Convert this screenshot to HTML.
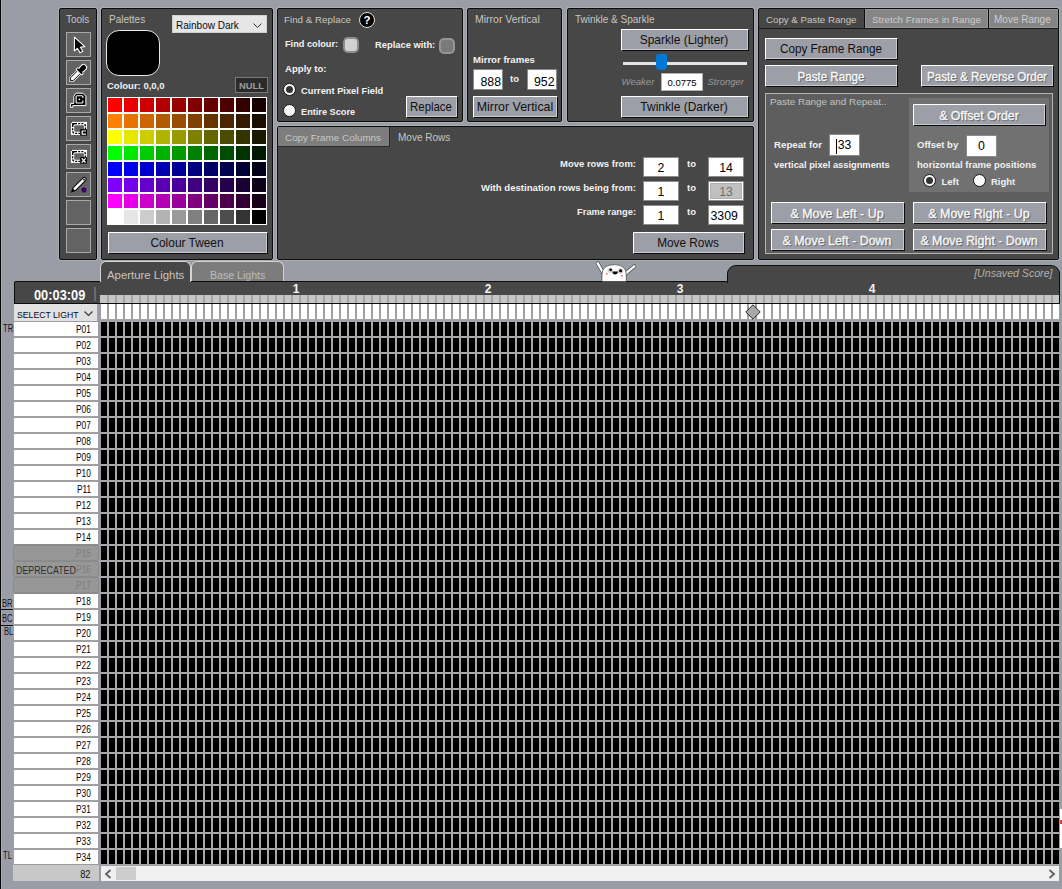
<!DOCTYPE html><html><head><meta charset="utf-8"><style>
html,body{margin:0;padding:0;}
body{width:1062px;height:889px;overflow:hidden;position:relative;background:#9a9da6;font-family:"Liberation Sans",sans-serif;}
body div{position:absolute;}
.t{white-space:nowrap;}
</style></head><body>
<div style="left:0px;top:0px;width:1px;height:889px;background:#060606"></div>
<div style="left:1px;top:0px;width:1px;height:889px;background:#aaadb4"></div>
<div style="left:59px;top:8px;width:38px;height:252px;background:#474747;border:1px solid #0c0c0c;border-radius:2px;box-shadow:0 0 0 1px #aaadb4;box-sizing:border-box"></div>
<div class="t" style="top:10px;font-size:10px;line-height:20px;color:#c9c6c0;left:66px;">Tools</div>
<div style="left:66px;top:32px;width:25px;height:25px;background:#636363;border:1px solid #a8a8a8;box-sizing:border-box"></div>
<div style="left:66px;top:60px;width:25px;height:25px;background:#636363;border:1px solid #a8a8a8;box-sizing:border-box"></div>
<div style="left:66px;top:88px;width:25px;height:25px;background:#636363;border:1px solid #a8a8a8;box-sizing:border-box"></div>
<div style="left:66px;top:116px;width:25px;height:25px;background:#636363;border:1px solid #a8a8a8;box-sizing:border-box"></div>
<div style="left:66px;top:144px;width:25px;height:25px;background:#636363;border:1px solid #a8a8a8;box-sizing:border-box"></div>
<div style="left:66px;top:172px;width:25px;height:25px;background:#636363;border:1px solid #a8a8a8;box-sizing:border-box"></div>
<div style="left:66px;top:200px;width:25px;height:25px;background:#636363;border:1px solid #a8a8a8;box-sizing:border-box"></div>
<div style="left:66px;top:228px;width:25px;height:25px;background:#636363;border:1px solid #a8a8a8;box-sizing:border-box"></div>
<svg style="position:absolute;left:66px;top:32px" width="25" height="25" viewBox="0 0 25 25"><path d="M8.4,5.2 L8.4,18.9 L11.4,16.3 L14.0,20.8 L16.8,19.2 L14.4,15.3 L18.9,14.6 Z" fill="#000" stroke="#fff" stroke-width="1.1" stroke-linejoin="round"/></svg>
<svg style="position:absolute;left:66px;top:60px" width="25" height="25" viewBox="0 0 25 25"><g transform="rotate(45 12.05 13)"><path d="M10.1,11.5 L14,11.5 L14,21.8 L12.05,23.8 L10.1,21.8 Z" fill="#fff" stroke="#fff" stroke-width="2.2"/><path d="M10.1,11.5 L14,11.5 L14,21.8 L12.05,23.8 L10.1,21.8 Z" fill="#fff" stroke="#000" stroke-width="0.9"/><rect x="7.9" y="9.4" width="8.3" height="2.6" rx="1.2" fill="#000" stroke="#fff" stroke-width="1"/><rect x="9.1" y="2.3" width="5.9" height="7.8" rx="2.6" fill="#000" stroke="#fff" stroke-width="1"/><rect x="9.3" y="9" width="5.5" height="2" fill="#000"/></g></svg>
<svg style="position:absolute;left:66px;top:88px" width="25" height="25" viewBox="0 0 25 25"><path d="M10.1,5.2 L16.9,5.2 L19.9,8.2 L19.9,17.6 L6.8,17.6 L6.8,19.4 L4.6,19.4 L4.6,15.4 L7.8,15.4 L7.8,8.2 Z" fill="#000" stroke="#fff" stroke-width="1"/><path d="M16.9,12.6 L16.9,14 Q16.9,15 15.9,15 L11.1,15 Q10.1,15 10.1,14 L10.1,8.8 Q10.1,7.8 11.1,7.8 L15.9,7.8 Q16.9,7.8 16.9,8.8 L16.9,10.2" fill="none" stroke="#fff" stroke-width="1.1"/><circle cx="13.4" cy="11.4" r="0.8" fill="#fff"/></svg>
<svg style="position:absolute;left:66px;top:116px" width="25" height="25" viewBox="0 0 25 25"><rect x="4.9" y="5.9" width="16.1" height="13" fill="#fff"/><rect x="6.6" y="7.6" width="12.8" height="9.8" rx="2.4" fill="none" stroke="#000" stroke-width="1.4" stroke-dasharray="2 1.2"/><rect x="8.2" y="9.2" width="9.8" height="6.6" rx="1.2" fill="#636363"/><path d="M6.1,7.1 L9.5,7.1 L6.1,10.5 Z" fill="#000"/><rect x="4.9" y="5.7" width="1" height="1" fill="#000"/><rect x="14.2" y="13.2" width="6.8" height="6.4" fill="#000"/><path d="M20,15 L16.2,15 L16.2,18.2 L20,18.2" fill="none" stroke="#fff" stroke-width="1.2"/></svg>
<svg style="position:absolute;left:66px;top:144px" width="25" height="25" viewBox="0 0 25 25"><rect x="4.9" y="5.9" width="16.1" height="13" fill="#fff"/><rect x="6.6" y="7.6" width="12.8" height="9.8" rx="2.4" fill="none" stroke="#000" stroke-width="1.4" stroke-dasharray="2 1.2"/><rect x="8.2" y="9.2" width="9.8" height="6.6" rx="1.2" fill="#636363"/><path d="M6.1,7.1 L9.5,7.1 L6.1,10.5 Z" fill="#000"/><rect x="4.9" y="5.7" width="1" height="1" fill="#000"/><rect x="14.2" y="13.2" width="6.8" height="6.4" fill="#000"/><path d="M15.8,14.4 L19.6,18.6 M19.6,14.4 L15.8,18.6" fill="none" stroke="#fff" stroke-width="1.4"/></svg>
<svg style="position:absolute;left:66px;top:172px" width="25" height="25" viewBox="0 0 25 25"><g transform="rotate(45 12 13.5)"><path d="M10.2,4.5 a1.8,1.8 0 0 1 3.6,0 L13.8,18.5 L12,22.5 L10.2,18.5 Z" fill="#fff" stroke="#000" stroke-width="1"/><path d="M10.6,19.3 L12,22.5 L13.4,19.3 Z" fill="#000"/><circle cx="12" cy="5" r="0.9" fill="#000"/></g><circle cx="18" cy="18" r="3.2" fill="#3a0a5a" stroke="#8a8a8a" stroke-width="0.6"/></svg>
<div style="left:101px;top:8px;width:172px;height:252px;background:#474747;border:1px solid #0c0c0c;border-radius:2px;box-shadow:0 0 0 1px #aaadb4;box-sizing:border-box"></div>
<div class="t" style="top:10px;font-size:10px;line-height:20px;color:#c9c6c0;left:109px;">Palettes</div>
<div style="left:172px;top:15px;width:95px;height:18px;background:#e6e6e6;border:1px solid #d0d0d0;box-sizing:border-box"></div>
<div class="t" style="top:16px;font-size:10px;line-height:20px;color:#0a0a1a;left:176px;">Rainbow Dark</div>
<svg style="position:absolute;left:253px;top:23px" width="9" height="5"><polyline points="0.5,0.5 4.5,4.5 8.5,0.5" fill="none" stroke="#333" stroke-width="1"/></svg>
<div style="left:106px;top:30px;width:54px;height:46px;background:#000;border:1px solid #e8e8e8;border-radius:13px;box-sizing:border-box"></div>
<div class="t" style="top:76px;font-size:9.5px;line-height:20px;color:#f2f2f2;font-weight:bold;left:107px;">Colour: 0,0,0</div>
<div style="left:235px;top:77px;width:33px;height:16px;background:#2b2b2b;border:1px solid #7a7a7a;box-sizing:border-box"></div>
<div class="t" style="top:76px;font-size:9.4px;line-height:20px;color:#9c9c9c;font-weight:bold;left:-48.5px;width:600px;text-align:center;">NULL</div>
<div style="left:107px;top:97px;width:160px;height:128px;background:#fff"></div>
<div style="left:108px;top:98px;width:14px;height:14px;background:#ff0000"></div>
<div style="left:124px;top:98px;width:14px;height:14px;background:#e60000"></div>
<div style="left:140px;top:98px;width:14px;height:14px;background:#cc0000"></div>
<div style="left:156px;top:98px;width:14px;height:14px;background:#b20000"></div>
<div style="left:172px;top:98px;width:14px;height:14px;background:#990000"></div>
<div style="left:188px;top:98px;width:14px;height:14px;background:#800000"></div>
<div style="left:204px;top:98px;width:14px;height:14px;background:#660000"></div>
<div style="left:220px;top:98px;width:14px;height:14px;background:#4c0000"></div>
<div style="left:236px;top:98px;width:14px;height:14px;background:#330000"></div>
<div style="left:252px;top:98px;width:14px;height:14px;background:#190000"></div>
<div style="left:108px;top:114px;width:14px;height:14px;background:#ff8000"></div>
<div style="left:124px;top:114px;width:14px;height:14px;background:#e67300"></div>
<div style="left:140px;top:114px;width:14px;height:14px;background:#cc6600"></div>
<div style="left:156px;top:114px;width:14px;height:14px;background:#b25a00"></div>
<div style="left:172px;top:114px;width:14px;height:14px;background:#994d00"></div>
<div style="left:188px;top:114px;width:14px;height:14px;background:#804000"></div>
<div style="left:204px;top:114px;width:14px;height:14px;background:#663300"></div>
<div style="left:220px;top:114px;width:14px;height:14px;background:#4c2600"></div>
<div style="left:236px;top:114px;width:14px;height:14px;background:#331a00"></div>
<div style="left:252px;top:114px;width:14px;height:14px;background:#190d00"></div>
<div style="left:108px;top:130px;width:14px;height:14px;background:#ffff00"></div>
<div style="left:124px;top:130px;width:14px;height:14px;background:#e6e600"></div>
<div style="left:140px;top:130px;width:14px;height:14px;background:#cccc00"></div>
<div style="left:156px;top:130px;width:14px;height:14px;background:#b2b200"></div>
<div style="left:172px;top:130px;width:14px;height:14px;background:#999900"></div>
<div style="left:188px;top:130px;width:14px;height:14px;background:#808000"></div>
<div style="left:204px;top:130px;width:14px;height:14px;background:#666600"></div>
<div style="left:220px;top:130px;width:14px;height:14px;background:#4c4c00"></div>
<div style="left:236px;top:130px;width:14px;height:14px;background:#333300"></div>
<div style="left:252px;top:130px;width:14px;height:14px;background:#191900"></div>
<div style="left:108px;top:146px;width:14px;height:14px;background:#00ff00"></div>
<div style="left:124px;top:146px;width:14px;height:14px;background:#00e600"></div>
<div style="left:140px;top:146px;width:14px;height:14px;background:#00cc00"></div>
<div style="left:156px;top:146px;width:14px;height:14px;background:#00b200"></div>
<div style="left:172px;top:146px;width:14px;height:14px;background:#009900"></div>
<div style="left:188px;top:146px;width:14px;height:14px;background:#008000"></div>
<div style="left:204px;top:146px;width:14px;height:14px;background:#006600"></div>
<div style="left:220px;top:146px;width:14px;height:14px;background:#004c00"></div>
<div style="left:236px;top:146px;width:14px;height:14px;background:#003300"></div>
<div style="left:252px;top:146px;width:14px;height:14px;background:#001900"></div>
<div style="left:108px;top:162px;width:14px;height:14px;background:#0000ff"></div>
<div style="left:124px;top:162px;width:14px;height:14px;background:#0000e6"></div>
<div style="left:140px;top:162px;width:14px;height:14px;background:#0000cc"></div>
<div style="left:156px;top:162px;width:14px;height:14px;background:#0000b2"></div>
<div style="left:172px;top:162px;width:14px;height:14px;background:#000099"></div>
<div style="left:188px;top:162px;width:14px;height:14px;background:#000080"></div>
<div style="left:204px;top:162px;width:14px;height:14px;background:#000066"></div>
<div style="left:220px;top:162px;width:14px;height:14px;background:#00004c"></div>
<div style="left:236px;top:162px;width:14px;height:14px;background:#000033"></div>
<div style="left:252px;top:162px;width:14px;height:14px;background:#000019"></div>
<div style="left:108px;top:178px;width:14px;height:14px;background:#8000ff"></div>
<div style="left:124px;top:178px;width:14px;height:14px;background:#7300e6"></div>
<div style="left:140px;top:178px;width:14px;height:14px;background:#6600cc"></div>
<div style="left:156px;top:178px;width:14px;height:14px;background:#5a00b2"></div>
<div style="left:172px;top:178px;width:14px;height:14px;background:#4d0099"></div>
<div style="left:188px;top:178px;width:14px;height:14px;background:#400080"></div>
<div style="left:204px;top:178px;width:14px;height:14px;background:#330066"></div>
<div style="left:220px;top:178px;width:14px;height:14px;background:#26004c"></div>
<div style="left:236px;top:178px;width:14px;height:14px;background:#1a0033"></div>
<div style="left:252px;top:178px;width:14px;height:14px;background:#0d0019"></div>
<div style="left:108px;top:194px;width:14px;height:14px;background:#ff00ff"></div>
<div style="left:124px;top:194px;width:14px;height:14px;background:#e600e6"></div>
<div style="left:140px;top:194px;width:14px;height:14px;background:#cc00cc"></div>
<div style="left:156px;top:194px;width:14px;height:14px;background:#b200b2"></div>
<div style="left:172px;top:194px;width:14px;height:14px;background:#990099"></div>
<div style="left:188px;top:194px;width:14px;height:14px;background:#800080"></div>
<div style="left:204px;top:194px;width:14px;height:14px;background:#660066"></div>
<div style="left:220px;top:194px;width:14px;height:14px;background:#4c004c"></div>
<div style="left:236px;top:194px;width:14px;height:14px;background:#330033"></div>
<div style="left:252px;top:194px;width:14px;height:14px;background:#190019"></div>
<div style="left:108px;top:210px;width:14px;height:14px;background:#ffffff"></div>
<div style="left:124px;top:210px;width:14px;height:14px;background:#e6e6e6"></div>
<div style="left:140px;top:210px;width:14px;height:14px;background:#cccccc"></div>
<div style="left:156px;top:210px;width:14px;height:14px;background:#b3b3b3"></div>
<div style="left:172px;top:210px;width:14px;height:14px;background:#999999"></div>
<div style="left:188px;top:210px;width:14px;height:14px;background:#808080"></div>
<div style="left:204px;top:210px;width:14px;height:14px;background:#666666"></div>
<div style="left:220px;top:210px;width:14px;height:14px;background:#4d4d4d"></div>
<div style="left:236px;top:210px;width:14px;height:14px;background:#333333"></div>
<div style="left:252px;top:210px;width:14px;height:14px;background:#000000"></div>
<div style="left:108px;top:232px;width:160px;height:22px;background:#9c9fa7;border-top:1px solid #fff;border-left:1px solid #fff;border-right:1px solid #0c0c0c;border-bottom:1px solid #0c0c0c;box-shadow:inset -1px -1px 0 #c8c9cc;box-sizing:border-box"></div>
<div class="t" style="top:233px;font-size:12.73px;line-height:20px;color:#101010;left:-113.0px;width:600px;text-align:center;transform-origin:50% 0;transform:scaleX(0.935);">Colour Tween</div>
<div style="left:277px;top:8px;width:186px;height:114px;background:#474747;border:1px solid #0c0c0c;border-radius:2px;box-shadow:0 0 0 1px #aaadb4;box-sizing:border-box"></div>
<div class="t" style="top:10px;font-size:9.8px;line-height:20px;color:#c9c6c0;left:284px;">Find &amp; Replace</div>
<div style="left:359px;top:12px;width:16px;height:16px;border-radius:50%;background:#000;border:1.5px solid #e0e0e0;box-sizing:border-box"></div>
<div class="t" style="top:10px;font-size:11.5px;line-height:20px;color:#fff;font-weight:bold;left:67px;width:600px;text-align:center;">?</div>
<div class="t" style="top:34px;font-size:9.2px;line-height:20px;color:#f2f2f2;font-weight:bold;left:285px;">Find colour:</div>
<div style="left:343px;top:37px;width:16px;height:16px;background:#d2d2d2;border:2px solid #8e8e8e;border-radius:5px;box-sizing:border-box"></div>
<div class="t" style="top:35px;font-size:9.35px;line-height:20px;color:#f2f2f2;font-weight:bold;left:375px;">Replace with:</div>
<div style="left:439px;top:38px;width:16px;height:16px;background:#7a7a7a;border:2px solid #959595;border-radius:5px;box-sizing:border-box"></div>
<div class="t" style="top:59px;font-size:9.6px;line-height:20px;color:#f2f2f2;font-weight:bold;left:285px;">Apply to:</div>
<div style="left:283px;top:83px;width:13px;height:13px;border-radius:50%;background:#fafafa;border:1px solid #151515;box-sizing:border-box"></div>
<div style="left:286px;top:86px;width:7px;height:7px;border-radius:50%;background:#333"></div>
<div class="t" style="top:81px;font-size:9.3px;line-height:20px;color:#f2f2f2;font-weight:bold;left:301px;">Current Pixel Field</div>
<div style="left:283px;top:104px;width:13px;height:13px;border-radius:50%;background:#fafafa;border:1px solid #151515;box-sizing:border-box"></div>
<div class="t" style="top:102px;font-size:9.2px;line-height:20px;color:#f2f2f2;font-weight:bold;left:301px;">Entire Score</div>
<div style="left:406px;top:96px;width:52px;height:22px;background:#9c9fa7;border-top:1px solid #fff;border-left:1px solid #fff;border-right:1px solid #0c0c0c;border-bottom:1px solid #0c0c0c;box-shadow:inset -1px -1px 0 #c8c9cc;box-sizing:border-box"></div>
<div class="t" style="top:97px;font-size:12.2px;line-height:20px;color:#101010;left:131.0px;width:600px;text-align:center;transform-origin:50% 0;transform:scaleX(0.935);">Replace</div>
<div style="left:467px;top:8px;width:95px;height:114px;background:#474747;border:1px solid #0c0c0c;border-radius:2px;box-shadow:0 0 0 1px #aaadb4;box-sizing:border-box"></div>
<div class="t" style="top:9px;font-size:10.5px;line-height:20px;color:#c9c6c0;left:475px;">Mirror Vertical</div>
<div class="t" style="top:50px;font-size:9.6px;line-height:20px;color:#f2f2f2;font-weight:bold;left:473px;">Mirror frames</div>
<div style="left:473px;top:69px;width:30px;height:21px;background:#fff;border:1px solid #8a8a8a;box-sizing:border-box"></div>
<div class="t" style="top:72px;font-size:12.3px;line-height:20px;color:#000;right:561px;">888</div>
<div class="t" style="top:69px;font-size:9.5px;line-height:20px;color:#f2f2f2;font-weight:bold;left:510px;">to</div>
<div style="left:527px;top:69px;width:30px;height:21px;background:#fff;border:1px solid #8a8a8a;box-sizing:border-box"></div>
<div class="t" style="top:72px;font-size:12.3px;line-height:20px;color:#000;right:507.5px;">952</div>
<div style="left:473px;top:96px;width:85px;height:22px;background:#9c9fa7;border-top:1px solid #fff;border-left:1px solid #fff;border-right:1px solid #0c0c0c;border-bottom:1px solid #0c0c0c;box-shadow:inset -1px -1px 0 #c8c9cc;box-sizing:border-box"></div>
<div class="t" style="top:97px;font-size:13.27px;line-height:20px;color:#101010;left:214.5px;width:600px;text-align:center;transform-origin:50% 0;transform:scaleX(0.935);">Mirror Vertical</div>
<div style="left:567px;top:8px;width:187px;height:114px;background:#474747;border:1px solid #0c0c0c;border-radius:2px;box-shadow:0 0 0 1px #aaadb4;box-sizing:border-box"></div>
<div class="t" style="top:10px;font-size:10px;line-height:20px;color:#c9c6c0;left:575px;">Twinkle &amp; Sparkle</div>
<div style="left:621px;top:29px;width:128px;height:22px;background:#9c9fa7;border-top:1px solid #fff;border-left:1px solid #fff;border-right:1px solid #0c0c0c;border-bottom:1px solid #0c0c0c;box-shadow:inset -1px -1px 0 #c8c9cc;box-sizing:border-box"></div>
<div class="t" style="top:30px;font-size:12.84px;line-height:20px;color:#101010;left:384.0px;width:600px;text-align:center;transform-origin:50% 0;transform:scaleX(0.935);">Sparkle (Lighter)</div>
<div style="left:623px;top:62px;width:124px;height:3px;background:#e4e4e4"></div>
<div style="left:656px;top:54px;width:11px;height:16px;background:#0078d7;border-radius:2px 2px 4px 4px"></div>
<div class="t" style="top:72px;font-size:9.6px;line-height:20px;color:#9a9a9a;font-style:italic;left:621.5px;">Weaker</div>
<div style="left:661px;top:73px;width:42px;height:18px;background:#fff;border:1px solid #b0b0b0;box-sizing:border-box"></div>
<div class="t" style="top:73px;font-size:9.5px;line-height:20px;color:#000;left:382.0px;width:600px;text-align:center;">0.0775</div>
<div class="t" style="top:72px;font-size:9.5px;line-height:20px;color:#9a9a9a;font-style:italic;left:707.5px;">Stronger</div>
<div style="left:621px;top:96px;width:128px;height:22px;background:#9c9fa7;border-top:1px solid #fff;border-left:1px solid #fff;border-right:1px solid #0c0c0c;border-bottom:1px solid #0c0c0c;box-shadow:inset -1px -1px 0 #c8c9cc;box-sizing:border-box"></div>
<div class="t" style="top:97px;font-size:12.84px;line-height:20px;color:#101010;left:384.0px;width:600px;text-align:center;transform-origin:50% 0;transform:scaleX(0.935);">Twinkle (Darker)</div>
<div style="left:277px;top:126px;width:477px;height:134px;background:#474747;border:1px solid #0c0c0c;border-radius:2px;box-shadow:0 0 0 1px #aaadb4;box-sizing:border-box"></div>
<div style="left:278px;top:127px;width:111px;height:19px;background:#7d7d7d;border-right:1px solid #2a2a2a;border-bottom:1px solid #2a2a2a"></div>
<div class="t" style="top:128px;font-size:9.9px;line-height:20px;color:#c8c8c8;left:285px;">Copy Frame Columns</div>
<div class="t" style="top:128px;font-size:10px;line-height:20px;color:#c9c6c0;left:398px;">Move Rows</div>
<div class="t" style="top:154px;font-size:9.5px;line-height:20px;color:#f2f2f2;font-weight:bold;right:426px;">Move rows from:</div>
<div style="left:643px;top:157px;width:36px;height:20px;background:#fff;border:1px solid #8a8a8a;box-sizing:border-box"></div>
<div class="t" style="top:158px;font-size:12.3px;line-height:20px;color:#000;left:361.0px;width:600px;text-align:center;">2</div>
<div class="t" style="top:154px;font-size:9.5px;line-height:20px;color:#f2f2f2;font-weight:bold;left:687px;">to</div>
<div style="left:708px;top:157px;width:36px;height:20px;background:#fff;border:1px solid #8a8a8a;box-sizing:border-box"></div>
<div class="t" style="top:158px;font-size:12.3px;line-height:20px;color:#000;left:426.0px;width:600px;text-align:center;">14</div>
<div class="t" style="top:178px;font-size:9.6px;line-height:20px;color:#f2f2f2;font-weight:bold;right:426px;">With destination rows being from:</div>
<div style="left:643px;top:181px;width:36px;height:20px;background:#fff;border:1px solid #8a8a8a;box-sizing:border-box"></div>
<div class="t" style="top:182px;font-size:12.3px;line-height:20px;color:#000;left:361.0px;width:600px;text-align:center;">1</div>
<div class="t" style="top:178px;font-size:9.5px;line-height:20px;color:#f2f2f2;font-weight:bold;left:687px;">to</div>
<div style="left:708px;top:181px;width:36px;height:20px;background:#fff;border:1px solid #8a8a8a;box-sizing:border-box"></div>
<div style="left:710px;top:183px;width:32px;height:16px;background:#c0c0c0;border:1px solid #b0b0b0;box-sizing:border-box"></div>
<div class="t" style="top:182px;font-size:12.3px;line-height:20px;color:#6f6f6f;left:426px;width:600px;text-align:center;">13</div>
<div class="t" style="top:202px;font-size:9.3px;line-height:20px;color:#f2f2f2;font-weight:bold;right:426px;">Frame range:</div>
<div style="left:643px;top:205px;width:36px;height:20px;background:#fff;border:1px solid #8a8a8a;box-sizing:border-box"></div>
<div class="t" style="top:206px;font-size:12.3px;line-height:20px;color:#000;left:361.0px;width:600px;text-align:center;">1</div>
<div class="t" style="top:202px;font-size:9.5px;line-height:20px;color:#f2f2f2;font-weight:bold;left:687px;">to</div>
<div style="left:708px;top:205px;width:36px;height:20px;background:#fff;border:1px solid #8a8a8a;box-sizing:border-box"></div>
<div class="t" style="top:206px;font-size:12.3px;line-height:20px;color:#000;left:710.5px;">3309</div>
<div style="left:633px;top:232px;width:112px;height:22px;background:#9c9fa7;border-top:1px solid #fff;border-left:1px solid #fff;border-right:1px solid #0c0c0c;border-bottom:1px solid #0c0c0c;box-shadow:inset -1px -1px 0 #c8c9cc;box-sizing:border-box"></div>
<div class="t" style="top:233px;font-size:12.63px;line-height:20px;color:#101010;left:388.0px;width:600px;text-align:center;transform-origin:50% 0;transform:scaleX(0.935);">Move Rows</div>
<div style="left:758px;top:8px;width:301px;height:252px;background:#474747;border:1px solid #0c0c0c;border-radius:2px;box-shadow:0 0 0 1px #aaadb4;box-sizing:border-box"></div>
<div style="left:759px;top:28px;width:299px;height:1px;background:#1a1a1a"></div>
<div style="left:865px;top:9px;width:123px;height:19px;background:#858585;border:1px solid #959595;box-sizing:border-box"></div>
<div style="left:864px;top:9px;width:1px;height:19px;background:#0c0c0c"></div>
<div style="left:988px;top:9px;width:1px;height:19px;background:#0c0c0c"></div>
<div style="left:989px;top:9px;width:69px;height:19px;background:#858585;border:1px solid #959595;box-sizing:border-box"></div>
<div class="t" style="top:10px;font-size:9.7px;line-height:20px;color:#c9c6c0;left:766px;">Copy &amp; Paste Range</div>
<div class="t" style="top:10px;font-size:9.8px;line-height:20px;color:#cdcdcd;left:872px;">Stretch Frames in Range</div>
<div class="t" style="top:10px;font-size:10px;line-height:20px;color:#cdcdcd;left:994px;">Move Range</div>
<div style="left:765px;top:38px;width:133px;height:22px;background:#9c9fa7;border-top:1px solid #fff;border-left:1px solid #fff;border-right:1px solid #0c0c0c;border-bottom:1px solid #0c0c0c;box-shadow:inset -1px -1px 0 #c8c9cc;box-sizing:border-box"></div>
<div class="t" style="top:39px;font-size:12.52px;line-height:20px;color:#101010;left:530.5px;width:600px;text-align:center;transform-origin:50% 0;transform:scaleX(0.935);">Copy Frame Range</div>
<div style="left:765px;top:65px;width:133px;height:22px;background:#9c9fa7;border-top:1px solid #fff;border-left:1px solid #fff;border-right:1px solid #0c0c0c;border-bottom:1px solid #0c0c0c;box-shadow:inset -1px -1px 0 #c8c9cc;box-sizing:border-box"></div>
<div class="t" style="top:68px;font-size:12.41px;line-height:20px;color:#6a6a6a;left:531.5px;width:600px;text-align:center;transform-origin:50% 0;transform:scaleX(0.935);-webkit-text-stroke:0.35px #6a6a6a;">Paste Range</div>
<div class="t" style="top:67px;font-size:12.41px;line-height:20px;color:#f8f8f8;left:530.5px;width:600px;text-align:center;transform-origin:50% 0;transform:scaleX(0.935);-webkit-text-stroke:0.35px #f8f8f8;">Paste Range</div>
<div style="left:921px;top:65px;width:133px;height:22px;background:#9c9fa7;border-top:1px solid #fff;border-left:1px solid #fff;border-right:1px solid #0c0c0c;border-bottom:1px solid #0c0c0c;box-shadow:inset -1px -1px 0 #c8c9cc;box-sizing:border-box"></div>
<div class="t" style="top:68px;font-size:12.41px;line-height:20px;color:#6a6a6a;left:687.5px;width:600px;text-align:center;transform-origin:50% 0;transform:scaleX(0.935);-webkit-text-stroke:0.35px #6a6a6a;">Paste &amp; Reverse Order</div>
<div class="t" style="top:67px;font-size:12.41px;line-height:20px;color:#f8f8f8;left:686.5px;width:600px;text-align:center;transform-origin:50% 0;transform:scaleX(0.935);-webkit-text-stroke:0.35px #f8f8f8;">Paste &amp; Reverse Order</div>
<div style="left:765px;top:93px;width:288px;height:161px;background:#5e5e5e;border:1px solid #b4b4b4;box-sizing:border-box"></div>
<div class="t" style="top:92px;font-size:9.9px;line-height:20px;color:#c2c2c2;left:770px;">Paste Range and Repeat..</div>
<div style="left:909px;top:98px;width:140px;height:94px;background:#717171"></div>
<div style="left:913px;top:104px;width:133px;height:22px;background:#9c9fa7;border-top:1px solid #fff;border-left:1px solid #fff;border-right:1px solid #0c0c0c;border-bottom:1px solid #0c0c0c;box-shadow:inset -1px -1px 0 #c8c9cc;box-sizing:border-box"></div>
<div class="t" style="top:107px;font-size:13.27px;line-height:20px;color:#6a6a6a;left:679.5px;width:600px;text-align:center;transform-origin:50% 0;transform:scaleX(0.935);-webkit-text-stroke:0.35px #6a6a6a;">&amp; Offset Order</div>
<div class="t" style="top:106px;font-size:13.27px;line-height:20px;color:#f8f8f8;left:678.5px;width:600px;text-align:center;transform-origin:50% 0;transform:scaleX(0.935);-webkit-text-stroke:0.35px #f8f8f8;">&amp; Offset Order</div>
<div class="t" style="top:135px;font-size:9.7px;line-height:20px;color:#f2f2f2;font-weight:bold;left:774px;">Repeat for</div>
<div style="left:829px;top:134px;width:31px;height:22px;background:#fff;border:1px solid #8a8a8a;box-sizing:border-box"></div>
<div class="t" style="top:135px;font-size:12.3px;line-height:20px;color:#000;left:544.5px;width:600px;text-align:center;">33</div>
<div style="left:836px;top:139px;width:1px;height:15px;background:#000"></div>
<div class="t" style="top:155px;font-size:9.3px;line-height:20px;color:#f2f2f2;font-weight:bold;left:774px;">vertical pixel assignments</div>
<div class="t" style="top:135px;font-size:9.5px;line-height:20px;color:#f2f2f2;font-weight:bold;left:917px;">Offset by</div>
<div style="left:966px;top:135px;width:31px;height:22px;background:#fff;border:1px solid #8a8a8a;box-sizing:border-box"></div>
<div class="t" style="top:136px;font-size:12.3px;line-height:20px;color:#000;left:681.5px;width:600px;text-align:center;">0</div>
<div class="t" style="top:155px;font-size:9.55px;line-height:20px;color:#f2f2f2;font-weight:bold;left:917px;">horizontal frame positions</div>
<div style="left:923px;top:174px;width:13px;height:13px;border-radius:50%;background:#fafafa;border:1px solid #151515;box-sizing:border-box"></div>
<div style="left:926px;top:177px;width:7px;height:7px;border-radius:50%;background:#333"></div>
<div class="t" style="top:172px;font-size:9.5px;line-height:20px;color:#f2f2f2;font-weight:bold;left:941.5px;">Left</div>
<div style="left:973px;top:174px;width:13px;height:13px;border-radius:50%;background:#fafafa;border:1px solid #151515;box-sizing:border-box"></div>
<div class="t" style="top:172px;font-size:9.5px;line-height:20px;color:#f2f2f2;font-weight:bold;left:991px;">Right</div>
<div style="left:771px;top:202px;width:134px;height:22px;background:#9c9fa7;border-top:1px solid #fff;border-left:1px solid #fff;border-right:1px solid #0c0c0c;border-bottom:1px solid #0c0c0c;box-shadow:inset -1px -1px 0 #c8c9cc;box-sizing:border-box"></div>
<div class="t" style="top:205px;font-size:13.27px;line-height:20px;color:#6a6a6a;left:538.0px;width:600px;text-align:center;transform-origin:50% 0;transform:scaleX(0.935);-webkit-text-stroke:0.35px #6a6a6a;">&amp; Move Left - Up</div>
<div class="t" style="top:204px;font-size:13.27px;line-height:20px;color:#f8f8f8;left:537.0px;width:600px;text-align:center;transform-origin:50% 0;transform:scaleX(0.935);-webkit-text-stroke:0.35px #f8f8f8;">&amp; Move Left - Up</div>
<div style="left:913px;top:202px;width:134px;height:22px;background:#9c9fa7;border-top:1px solid #fff;border-left:1px solid #fff;border-right:1px solid #0c0c0c;border-bottom:1px solid #0c0c0c;box-shadow:inset -1px -1px 0 #c8c9cc;box-sizing:border-box"></div>
<div class="t" style="top:205px;font-size:13.27px;line-height:20px;color:#6a6a6a;left:680.0px;width:600px;text-align:center;transform-origin:50% 0;transform:scaleX(0.935);-webkit-text-stroke:0.35px #6a6a6a;">&amp; Move Right - Up</div>
<div class="t" style="top:204px;font-size:13.27px;line-height:20px;color:#f8f8f8;left:679.0px;width:600px;text-align:center;transform-origin:50% 0;transform:scaleX(0.935);-webkit-text-stroke:0.35px #f8f8f8;">&amp; Move Right - Up</div>
<div style="left:771px;top:229px;width:134px;height:22px;background:#9c9fa7;border-top:1px solid #fff;border-left:1px solid #fff;border-right:1px solid #0c0c0c;border-bottom:1px solid #0c0c0c;box-shadow:inset -1px -1px 0 #c8c9cc;box-sizing:border-box"></div>
<div class="t" style="top:232px;font-size:13.27px;line-height:20px;color:#6a6a6a;left:538.0px;width:600px;text-align:center;transform-origin:50% 0;transform:scaleX(0.935);-webkit-text-stroke:0.35px #6a6a6a;">&amp; Move Left - Down</div>
<div class="t" style="top:231px;font-size:13.27px;line-height:20px;color:#f8f8f8;left:537.0px;width:600px;text-align:center;transform-origin:50% 0;transform:scaleX(0.935);-webkit-text-stroke:0.35px #f8f8f8;">&amp; Move Left - Down</div>
<div style="left:913px;top:229px;width:134px;height:22px;background:#9c9fa7;border-top:1px solid #fff;border-left:1px solid #fff;border-right:1px solid #0c0c0c;border-bottom:1px solid #0c0c0c;box-shadow:inset -1px -1px 0 #c8c9cc;box-sizing:border-box"></div>
<div class="t" style="top:232px;font-size:13.27px;line-height:20px;color:#6a6a6a;left:680.0px;width:600px;text-align:center;transform-origin:50% 0;transform:scaleX(0.935);-webkit-text-stroke:0.35px #6a6a6a;">&amp; Move Right - Down</div>
<div class="t" style="top:231px;font-size:13.27px;line-height:20px;color:#f8f8f8;left:679.0px;width:600px;text-align:center;transform-origin:50% 0;transform:scaleX(0.935);-webkit-text-stroke:0.35px #f8f8f8;">&amp; Move Right - Down</div>
<div style="left:14px;top:281px;width:1046px;height:23px;background:#474747;border-top:1px solid #0c0c0c;border-right:1px solid #0c0c0c;border-left:1px solid #0c0c0c;border-top-left-radius:2px;box-sizing:border-box"></div>
<div style="left:727px;top:265px;width:333px;height:18px;background:#474747;border-top:1px solid #0c0c0c;border-right:1px solid #0c0c0c;border-left:1px solid #0c0c0c;border-top-left-radius:9px;border-top-right-radius:9px;box-sizing:border-box"></div>
<div class="t" style="top:263px;font-size:10.6px;line-height:20px;color:#b5b0a6;font-style:italic;right:9.5px;">[Unsaved Score]</div>
<div style="left:191px;top:261px;width:93px;height:20px;background:#7c7c7c;border:1px solid #d4d4d4;border-bottom:none;border-top-left-radius:6px;border-top-right-radius:6px;box-sizing:border-box"></div>
<div class="t" style="top:265px;font-size:10.6px;line-height:20px;color:#bdbdbd;left:210px;">Base Lights</div>
<div style="left:100px;top:261px;width:91px;height:21px;background:#474747;border:1px solid #d4d4d4;border-bottom:none;border-top-left-radius:6px;border-top-right-radius:6px;box-sizing:border-box"></div>
<div class="t" style="top:265px;font-size:11.4px;line-height:20px;color:#c9c6c0;left:107px;">Aperture Lights</div>
<div class="t" style="top:285px;font-size:14px;line-height:20px;color:#fafafa;font-weight:bold;left:34px;transform-origin:0 0;transform:scaleX(0.915);">00:03:09</div>
<div style="left:94px;top:287px;width:2px;height:14px;background:#6a6a72"></div>
<div class="t" style="top:279px;font-size:12px;line-height:20px;color:#f4f4f4;font-weight:bold;left:-4px;width:600px;text-align:center;">1</div>
<div class="t" style="top:279px;font-size:12px;line-height:20px;color:#f4f4f4;font-weight:bold;left:188px;width:600px;text-align:center;">2</div>
<div class="t" style="top:279px;font-size:12px;line-height:20px;color:#f4f4f4;font-weight:bold;left:380px;width:600px;text-align:center;">3</div>
<div class="t" style="top:279px;font-size:12px;line-height:20px;color:#f4f4f4;font-weight:bold;left:572px;width:600px;text-align:center;">4</div>
<div style="left:100px;top:295px;width:1px;height:8px;background:#c8c8c8"></div>
<div style="left:101px;top:295px;width:958px;height:8px;background:repeating-linear-gradient(90deg,#c6c6c6 0 6px,#a4a4a4 6px 8px)"></div>
<div style="left:14px;top:303px;width:1045px;height:1px;background:#0c0c0c"></div>
<div style="left:14px;top:304px;width:84px;height:17px;background:#e1e1e1"></div>
<div style="left:97px;top:304px;width:1px;height:17px;background:#a4a4a4"></div>
<div class="t" style="top:305px;font-size:9.6px;line-height:20px;color:#0a0a14;left:16.5px;transform-origin:0 0;transform:scaleX(0.905);">SELECT LIGHT</div>
<svg style="position:absolute;left:84px;top:311px" width="9" height="6"><polyline points="0.5,0.5 4.5,4.5 8.5,0.5" fill="none" stroke="#333" stroke-width="1.1"/></svg>
<div style="left:98px;top:304px;width:3px;height:562px;background:#9a9da6"></div>
<div style="left:101px;top:304px;width:958px;height:15px;background:repeating-linear-gradient(90deg,#fff 0 6px,#a0a0a0 6px 8px)"></div>
<div style="left:101px;top:319px;width:958px;height:3px;background:#a2a4a9"></div>
<div style="left:101px;top:322px;width:958px;height:543px;background-color:#000;background-image:repeating-linear-gradient(90deg,transparent 0 6px,#a9a9a9 6px 8px),repeating-linear-gradient(180deg,transparent 0 14px,#a9a9a9 14px 16px)"></div>
<div style="left:14px;top:322px;width:84px;height:14px;background:#fff"></div>
<div style="left:14px;top:336px;width:84px;height:2px;background:#a0a0a0"></div>
<div class="t" style="top:320px;font-size:10px;line-height:20px;color:#000008;right:971px;transform-origin:100% 0;transform:scaleX(0.83);">P01</div>
<div style="left:14px;top:338px;width:84px;height:14px;background:#fff"></div>
<div style="left:14px;top:352px;width:84px;height:2px;background:#a0a0a0"></div>
<div class="t" style="top:336px;font-size:10px;line-height:20px;color:#000008;right:971px;transform-origin:100% 0;transform:scaleX(0.83);">P02</div>
<div style="left:14px;top:354px;width:84px;height:14px;background:#fff"></div>
<div style="left:14px;top:368px;width:84px;height:2px;background:#a0a0a0"></div>
<div class="t" style="top:352px;font-size:10px;line-height:20px;color:#000008;right:971px;transform-origin:100% 0;transform:scaleX(0.83);">P03</div>
<div style="left:14px;top:370px;width:84px;height:14px;background:#fff"></div>
<div style="left:14px;top:384px;width:84px;height:2px;background:#a0a0a0"></div>
<div class="t" style="top:368px;font-size:10px;line-height:20px;color:#000008;right:971px;transform-origin:100% 0;transform:scaleX(0.83);">P04</div>
<div style="left:14px;top:386px;width:84px;height:14px;background:#fff"></div>
<div style="left:14px;top:400px;width:84px;height:2px;background:#a0a0a0"></div>
<div class="t" style="top:384px;font-size:10px;line-height:20px;color:#000008;right:971px;transform-origin:100% 0;transform:scaleX(0.83);">P05</div>
<div style="left:14px;top:402px;width:84px;height:14px;background:#fff"></div>
<div style="left:14px;top:416px;width:84px;height:2px;background:#a0a0a0"></div>
<div class="t" style="top:400px;font-size:10px;line-height:20px;color:#000008;right:971px;transform-origin:100% 0;transform:scaleX(0.83);">P06</div>
<div style="left:14px;top:418px;width:84px;height:14px;background:#fff"></div>
<div style="left:14px;top:432px;width:84px;height:2px;background:#a0a0a0"></div>
<div class="t" style="top:416px;font-size:10px;line-height:20px;color:#000008;right:971px;transform-origin:100% 0;transform:scaleX(0.83);">P07</div>
<div style="left:14px;top:434px;width:84px;height:14px;background:#fff"></div>
<div style="left:14px;top:448px;width:84px;height:2px;background:#a0a0a0"></div>
<div class="t" style="top:432px;font-size:10px;line-height:20px;color:#000008;right:971px;transform-origin:100% 0;transform:scaleX(0.83);">P08</div>
<div style="left:14px;top:450px;width:84px;height:14px;background:#fff"></div>
<div style="left:14px;top:464px;width:84px;height:2px;background:#a0a0a0"></div>
<div class="t" style="top:448px;font-size:10px;line-height:20px;color:#000008;right:971px;transform-origin:100% 0;transform:scaleX(0.83);">P09</div>
<div style="left:14px;top:466px;width:84px;height:14px;background:#fff"></div>
<div style="left:14px;top:480px;width:84px;height:2px;background:#a0a0a0"></div>
<div class="t" style="top:464px;font-size:10px;line-height:20px;color:#000008;right:971px;transform-origin:100% 0;transform:scaleX(0.83);">P10</div>
<div style="left:14px;top:482px;width:84px;height:14px;background:#fff"></div>
<div style="left:14px;top:496px;width:84px;height:2px;background:#a0a0a0"></div>
<div class="t" style="top:480px;font-size:10px;line-height:20px;color:#000008;right:971px;transform-origin:100% 0;transform:scaleX(0.83);">P11</div>
<div style="left:14px;top:498px;width:84px;height:14px;background:#fff"></div>
<div style="left:14px;top:512px;width:84px;height:2px;background:#a0a0a0"></div>
<div class="t" style="top:496px;font-size:10px;line-height:20px;color:#000008;right:971px;transform-origin:100% 0;transform:scaleX(0.83);">P12</div>
<div style="left:14px;top:514px;width:84px;height:14px;background:#fff"></div>
<div style="left:14px;top:528px;width:84px;height:2px;background:#a0a0a0"></div>
<div class="t" style="top:512px;font-size:10px;line-height:20px;color:#000008;right:971px;transform-origin:100% 0;transform:scaleX(0.83);">P13</div>
<div style="left:14px;top:530px;width:84px;height:14px;background:#fff"></div>
<div style="left:14px;top:544px;width:84px;height:2px;background:#8c8c8c"></div>
<div class="t" style="top:528px;font-size:10px;line-height:20px;color:#000008;right:971px;transform-origin:100% 0;transform:scaleX(0.83);">P14</div>
<div style="left:13px;top:545px;width:86px;height:16px;background:#979797;border:1px solid #8a8a8a;border-radius:3px;box-sizing:border-box"></div>
<div style="left:14px;top:560px;width:84px;height:2px;background:#8c8c8c"></div>
<div class="t" style="top:544px;font-size:10px;line-height:20px;color:#7c7c84;right:971px;transform-origin:100% 0;transform:scaleX(0.83);">P15</div>
<div style="left:13px;top:561px;width:86px;height:16px;background:#979797;border:1px solid #8a8a8a;border-radius:3px;box-sizing:border-box"></div>
<div style="left:14px;top:576px;width:84px;height:2px;background:#8c8c8c"></div>
<div class="t" style="top:560px;font-size:10px;line-height:20px;color:#7c7c84;right:971px;transform-origin:100% 0;transform:scaleX(0.83);">P16</div>
<div style="left:13px;top:577px;width:86px;height:16px;background:#979797;border:1px solid #8a8a8a;border-radius:3px;box-sizing:border-box"></div>
<div style="left:14px;top:592px;width:84px;height:2px;background:#8c8c8c"></div>
<div class="t" style="top:576px;font-size:10px;line-height:20px;color:#7c7c84;right:971px;transform-origin:100% 0;transform:scaleX(0.83);">P17</div>
<div style="left:14px;top:594px;width:84px;height:14px;background:#fff"></div>
<div style="left:14px;top:608px;width:84px;height:2px;background:#a0a0a0"></div>
<div class="t" style="top:592px;font-size:10px;line-height:20px;color:#000008;right:971px;transform-origin:100% 0;transform:scaleX(0.83);">P18</div>
<div style="left:14px;top:610px;width:84px;height:14px;background:#fff"></div>
<div style="left:14px;top:624px;width:84px;height:2px;background:#a0a0a0"></div>
<div class="t" style="top:608px;font-size:10px;line-height:20px;color:#000008;right:971px;transform-origin:100% 0;transform:scaleX(0.83);">P19</div>
<div style="left:14px;top:626px;width:84px;height:14px;background:#fff"></div>
<div style="left:14px;top:640px;width:84px;height:2px;background:#a0a0a0"></div>
<div class="t" style="top:624px;font-size:10px;line-height:20px;color:#000008;right:971px;transform-origin:100% 0;transform:scaleX(0.83);">P20</div>
<div style="left:14px;top:642px;width:84px;height:14px;background:#fff"></div>
<div style="left:14px;top:656px;width:84px;height:2px;background:#a0a0a0"></div>
<div class="t" style="top:640px;font-size:10px;line-height:20px;color:#000008;right:971px;transform-origin:100% 0;transform:scaleX(0.83);">P21</div>
<div style="left:14px;top:658px;width:84px;height:14px;background:#fff"></div>
<div style="left:14px;top:672px;width:84px;height:2px;background:#a0a0a0"></div>
<div class="t" style="top:656px;font-size:10px;line-height:20px;color:#000008;right:971px;transform-origin:100% 0;transform:scaleX(0.83);">P22</div>
<div style="left:14px;top:674px;width:84px;height:14px;background:#fff"></div>
<div style="left:14px;top:688px;width:84px;height:2px;background:#a0a0a0"></div>
<div class="t" style="top:672px;font-size:10px;line-height:20px;color:#000008;right:971px;transform-origin:100% 0;transform:scaleX(0.83);">P23</div>
<div style="left:14px;top:690px;width:84px;height:14px;background:#fff"></div>
<div style="left:14px;top:704px;width:84px;height:2px;background:#a0a0a0"></div>
<div class="t" style="top:688px;font-size:10px;line-height:20px;color:#000008;right:971px;transform-origin:100% 0;transform:scaleX(0.83);">P24</div>
<div style="left:14px;top:706px;width:84px;height:14px;background:#fff"></div>
<div style="left:14px;top:720px;width:84px;height:2px;background:#a0a0a0"></div>
<div class="t" style="top:704px;font-size:10px;line-height:20px;color:#000008;right:971px;transform-origin:100% 0;transform:scaleX(0.83);">P25</div>
<div style="left:14px;top:722px;width:84px;height:14px;background:#fff"></div>
<div style="left:14px;top:736px;width:84px;height:2px;background:#a0a0a0"></div>
<div class="t" style="top:720px;font-size:10px;line-height:20px;color:#000008;right:971px;transform-origin:100% 0;transform:scaleX(0.83);">P26</div>
<div style="left:14px;top:738px;width:84px;height:14px;background:#fff"></div>
<div style="left:14px;top:752px;width:84px;height:2px;background:#a0a0a0"></div>
<div class="t" style="top:736px;font-size:10px;line-height:20px;color:#000008;right:971px;transform-origin:100% 0;transform:scaleX(0.83);">P27</div>
<div style="left:14px;top:754px;width:84px;height:14px;background:#fff"></div>
<div style="left:14px;top:768px;width:84px;height:2px;background:#a0a0a0"></div>
<div class="t" style="top:752px;font-size:10px;line-height:20px;color:#000008;right:971px;transform-origin:100% 0;transform:scaleX(0.83);">P28</div>
<div style="left:14px;top:770px;width:84px;height:14px;background:#fff"></div>
<div style="left:14px;top:784px;width:84px;height:2px;background:#a0a0a0"></div>
<div class="t" style="top:768px;font-size:10px;line-height:20px;color:#000008;right:971px;transform-origin:100% 0;transform:scaleX(0.83);">P29</div>
<div style="left:14px;top:786px;width:84px;height:14px;background:#fff"></div>
<div style="left:14px;top:800px;width:84px;height:2px;background:#a0a0a0"></div>
<div class="t" style="top:784px;font-size:10px;line-height:20px;color:#000008;right:971px;transform-origin:100% 0;transform:scaleX(0.83);">P30</div>
<div style="left:14px;top:802px;width:84px;height:14px;background:#fff"></div>
<div style="left:14px;top:816px;width:84px;height:2px;background:#a0a0a0"></div>
<div class="t" style="top:800px;font-size:10px;line-height:20px;color:#000008;right:971px;transform-origin:100% 0;transform:scaleX(0.83);">P31</div>
<div style="left:14px;top:818px;width:84px;height:14px;background:#fff"></div>
<div style="left:14px;top:832px;width:84px;height:2px;background:#a0a0a0"></div>
<div class="t" style="top:816px;font-size:10px;line-height:20px;color:#000008;right:971px;transform-origin:100% 0;transform:scaleX(0.83);">P32</div>
<div style="left:14px;top:834px;width:84px;height:14px;background:#fff"></div>
<div style="left:14px;top:848px;width:84px;height:2px;background:#a0a0a0"></div>
<div class="t" style="top:832px;font-size:10px;line-height:20px;color:#000008;right:971px;transform-origin:100% 0;transform:scaleX(0.83);">P33</div>
<div style="left:14px;top:850px;width:84px;height:14px;background:#fff"></div>
<div class="t" style="top:848px;font-size:10px;line-height:20px;color:#000008;right:971px;transform-origin:100% 0;transform:scaleX(0.83);">P34</div>
<div class="t" style="top:561px;font-size:10px;line-height:20px;color:#2c2c2c;left:16.4px;transform-origin:0 0;transform:scaleX(0.885);">DEPRECATED</div>
<div class="t" style="top:319px;font-size:10px;line-height:20px;color:#101028;left:3px;transform-origin:0 0;transform:scaleX(0.76);">TR</div>
<div class="t" style="top:594px;font-size:10px;line-height:20px;color:#101028;left:1.5px;transform-origin:0 0;transform:scaleX(0.76);">BR</div>
<div style="left:1px;top:609px;width:12px;height:1px;background:#111"></div>
<div class="t" style="top:609px;font-size:10px;line-height:20px;color:#101028;left:1.5px;transform-origin:0 0;transform:scaleX(0.76);">BC</div>
<div style="left:1px;top:625px;width:12px;height:1px;background:#111"></div>
<div class="t" style="top:622px;font-size:10px;line-height:20px;color:#101028;left:3.5px;transform-origin:0 0;transform:scaleX(0.76);">BL</div>
<div class="t" style="top:846px;font-size:10px;line-height:20px;color:#101028;left:3.3px;transform-origin:0 0;transform:scaleX(0.76);">TL</div>
<svg style="position:absolute;left:745px;top:304px" width="16" height="16"><polygon points="8,0.8 15.2,8 8,15.2 0.8,8" fill="#a8a8a8" stroke="#222" stroke-width="1"/></svg>
<svg style="position:absolute;left:594px;top:260px" width="44" height="22" viewBox="0 0 44 22">
<g stroke="#3a3a3a" stroke-width="3.6" stroke-linecap="round"><line x1="3.6" y1="3.2" x2="9.8" y2="14"/><line x1="40.4" y1="6.2" x2="30.5" y2="14.5"/></g>
<g stroke="#fff" stroke-width="2.4" stroke-linecap="round"><line x1="3.6" y1="3.2" x2="9.8" y2="14"/><line x1="40.4" y1="6.2" x2="30.5" y2="14.5"/></g>
<path d="M7.9,21.5 L7.9,15 Q8,4.6 20.5,4.6 Q32.3,4.8 32.3,15 L32.3,21.5 Z" fill="#fff" stroke="#3a3a3a" stroke-width="0.7"/>
<circle cx="16" cy="10.3" r="2.6" fill="#d8d8d8"/><circle cx="26.6" cy="11" r="2.8" fill="#d0d0d0"/>
<circle cx="16.7" cy="9.8" r="1.4" fill="#000"/><circle cx="26.6" cy="10.8" r="1.5" fill="#000"/>
<path d="M18.3,11.5 L24,11.5 Q23.6,14.5 21.1,14.5 Q18.7,14.5 18.3,11.5 Z" fill="#000"/>
<circle cx="12.8" cy="13.7" r="1" fill="#f07878"/><circle cx="27.9" cy="15.7" r="1" fill="#f07878"/>
</svg>
<div style="left:13px;top:865px;width:86px;height:16px;background:#c8c8c8"></div>
<div class="t" style="top:865px;font-size:10.4px;line-height:20px;color:#101018;right:971.5px;transform-origin:100% 0;transform:scaleX(0.9);">82</div>
<div style="left:101px;top:866px;width:958px;height:15px;background:#f0f0f0"></div>
<div style="left:116px;top:867px;width:20px;height:13px;background:#cdcdcd"></div>
<svg style="position:absolute;left:104px;top:869px" width="9" height="10"><polyline points="6.5,1 2,5 6.5,9" fill="none" stroke="#606060" stroke-width="1.8"/></svg>
<svg style="position:absolute;left:1047px;top:869px" width="9" height="10"><polyline points="2.5,1 7,5 2.5,9" fill="none" stroke="#606060" stroke-width="1.8"/></svg>
<div style="left:1060px;top:809px;width:2px;height:39px;background:#fff"></div>
<div style="left:1060px;top:820px;width:2px;height:4px;background:#e04040"></div>
</body></html>
